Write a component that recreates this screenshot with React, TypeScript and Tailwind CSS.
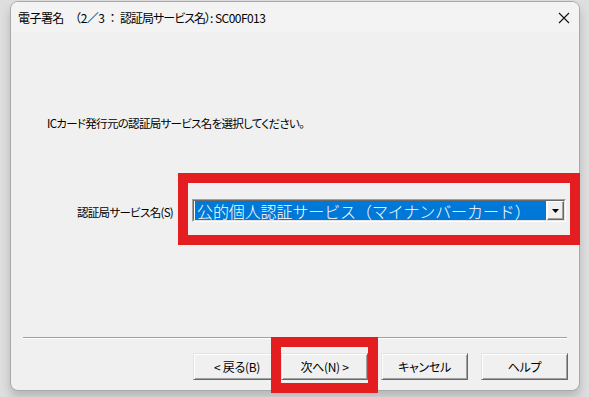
import React from "react";

const font = "font-['Noto_Sans_CJK_JP','Noto_Sans',sans-serif]";
const ui = "text-[11.5px] tracking-[-0.7px] [font-feature-settings:'palt']";

function Btn({ label, w }: { label: string; w: string }) {
  return (
    <button
      className={`${w} h-[27px] shrink-0 bg-[#f0f0f0] border border-t-[#e3e3e3] border-l-[#e3e3e3] border-r-[#696969] border-b-[#696969] shadow-[inset_1px_1px_0_#ffffff,inset_-1px_-1px_0_#a0a0a0] leading-none text-black flex items-center justify-center whitespace-pre text-[12px] tracking-[-0.3px] [font-feature-settings:'palt']`}
    >
      {label}
    </button>
  );
}

export default function App() {
  return (
    <div
      className={`relative w-[589px] h-[397px] overflow-hidden bg-[#dedede] pl-[10px] pt-[1px] ${font}`}
    >
      <div className="w-[570px] h-[390px] rounded-[8px] border border-[#a9a9a9] bg-[#f0f0f0] flex flex-col overflow-hidden shadow-[0_6px_10px_rgba(0,0,0,0.18)]">
        {/* title bar */}
        <div className="h-[30px] shrink-0 bg-[#f3f3f3] flex items-center pl-[7px] pr-[9px] pt-[1px]">
          <span className="text-[12px] text-black whitespace-pre tracking-[-0.55px]">
            電子署名　（2／3 ： <span className="tracking-[-1px] [font-feature-settings:'palt']">認証局サービス名）</span>: SC00F013
          </span>
          <svg className="ml-auto" width="12" height="12" viewBox="0 0 12 12">
            <path d="M1 1 L11 11 M11 1 L1 11" stroke="#111" strokeWidth="1.1" fill="none" />
          </svg>
        </div>

        {/* body */}
        <div className="flex-1 flex flex-col">
          <div className={`mt-[84px] pl-[36px] h-[16px] flex items-center text-black ${ui}`}>
            ICカード発行元の認証局サービス名を選択してください。
          </div>

          <div className="mt-[67px] flex items-center pl-[66px] h-[23px]">
            <span className={`w-[115px] shrink-0 pt-[5px] text-black ${ui}`}>
              認証局サービス名(S)
            </span>
            <div className="w-[374px] h-[23px] flex border border-t-[#a0a0a0] border-l-[#a0a0a0] border-r-white border-b-white">
              <div className="flex-1 flex border border-t-[#696969] border-l-[#696969] border-r-[#e3e3e3] border-b-[#e3e3e3] bg-white">
                <div className="flex-1 ml-[1px] bg-[#0078d7] text-white text-[16px] leading-none flex items-center pl-[2px] tracking-[-0.1px] font-light [-webkit-font-smoothing:none]">
                  公的個人認証サービス（マイナンバーカード）
                </div>
                <div className="w-[17px] ml-[1px] bg-[#f0f0f0] border border-t-white border-l-white border-r-[#696969] border-b-[#696969] shadow-[inset_-1px_-1px_0_#a0a0a0] flex items-center justify-center">
                  <svg width="7" height="4" viewBox="0 0 7 4">
                    <path d="M0 0 H7 L3.5 4 Z" fill="#000" />
                  </svg>
                </div>
              </div>
            </div>
          </div>

          <div className="mt-[115px] mx-[12px] h-[2px] border-t border-t-[#a0a0a0] border-b border-b-white" />

          <div className="mt-[14px] flex justify-end pr-[11px]">
            <Btn label="< 戻る(B)" w="w-[88px]" />
            <Btn label="次へ(N) >" w="w-[87px]" />
            <div className="w-[13px] shrink-0" />
            <Btn label="キャンセル" w="w-[87px]" />
            <div className="w-[13px] shrink-0" />
            <Btn label="ヘルプ" w="w-[87px]" />
          </div>
        </div>
      </div>

      {/* annotation overlays */}
      <div className="absolute left-[178px] top-[173px] w-[402px] h-[72px] border-[10px] border-[#e41e20]" />
      <div className="absolute left-[271px] top-[337px] w-[107px] h-[56px] border-[10px] border-[#e41e20]" />
    </div>
  );
}
